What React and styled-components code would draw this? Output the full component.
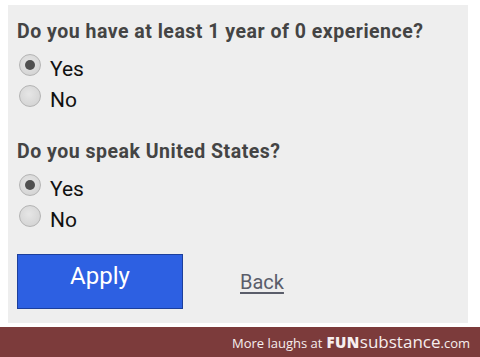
import React from "react";
import styled, { createGlobalStyle } from "styled-components";

const Global = createGlobalStyle`
  html, body { margin: 0; padding: 0; background: #ffffff; }
  body { width: 480px; height: 357px; overflow: hidden; font-family: Roboto, "Liberation Sans", sans-serif; }
`;

const Page = styled.div`
  width: 480px;
  height: 357px;
  display: flex;
  flex-direction: column;
  padding-top: 5px;
  box-sizing: border-box;
`;

const Panel = styled.div`
  margin-left: 8px;
  width: 460px;
  height: 318px;
  box-sizing: border-box;
  background: #eeeeee;
  padding: 16px 9px 0 9px;
  display: flex;
  flex-direction: column;
`;

const Question = styled.div`
  font-family: Roboto, "Liberation Sans", sans-serif;
  font-weight: 700;
  font-size: 19.5px;
  letter-spacing: 0.5px;
  line-height: 22px;
  color: #444444;
  margin-bottom: 11px;
  white-space: nowrap;
`;

const Group = styled.div`
  display: flex;
  flex-direction: column;
  margin-bottom: ${(p) => p.$gap || 0}px;
`;

const Option = styled.label`
  display: flex;
  align-items: flex-start;
  height: 31px;
  font-family: Roboto, "Liberation Sans", sans-serif;
  font-size: 21px;
  line-height: 31px;
  color: #111111;
`;

const Radio = styled.span`
  width: 22px;
  height: 22px;
  box-sizing: border-box;
  border-radius: 50%;
  margin-left: 2px;
  margin-right: 9px;
  border: 1.5px solid #b4b4b4;
  background: radial-gradient(circle at 45% 40%, #e6e6e6 0%, #d6d6d6 70%, #c8c8c8 100%);
  display: flex;
  align-items: center;
  justify-content: center;
  &::after {
    content: "";
    width: 10px;
    height: 10px;
    border-radius: 50%;
    background: #4f4f4f;
    display: ${(p) => (p.$checked ? "block" : "none")};
  }
`;

const Actions = styled.div`
  display: flex;
  align-items: center;
  margin-top: 18px;
  gap: 57px;
`;

const ApplyButton = styled.button`
  width: 166px;
  height: 55px;
  box-sizing: border-box;
  background: #2d60e2;
  border: 1.5px solid #1c3f9c;
  color: #ffffff;
  font-family: Roboto, "Liberation Sans", sans-serif;
  font-size: 24px;
  line-height: 28px;
  padding: 7px 0 0 0;
  display: flex;
  align-items: flex-start;
  justify-content: center;
  cursor: pointer;
`;

const BackLink = styled.a`
  font-family: Roboto, "Liberation Sans", sans-serif;
  font-size: 20px;
  color: #5a5d6a;
  text-decoration: underline;
  text-underline-offset: 3px;
  margin-top: 1px;
`;

const Footer = styled.div`
  margin-top: 4px;
  height: 30px;
  background: #7c3b3b;
  display: flex;
  align-items: baseline;
  justify-content: flex-end;
  padding: 0 10px 0 0;
  color: #f6eeee;
  font-family: "Open Sans", "DejaVu Sans", sans-serif;
  line-height: 30px;
`;

const Small = styled.span`
  font-size: 13px;
  margin-right: ${(p) => p.$mr || 0}px;
`;

const Fun = styled.span`
  font-size: 15px;
  font-weight: 800;
  letter-spacing: 0.5px;
`;

const Sub = styled.span`
  font-size: 17px;
`;

const options = [
  {
    q: "Do you have at least 1 year of 0 experience?",
    gap: 25,
  },
  {
    q: "Do you speak United States?",
    gap: 0,
  },
];

export default function App() {
  return (
    <>
      <Global />
      <Page>
        <Panel>
          {options.map((o) => (
            <React.Fragment key={o.q}>
              <Question>{o.q}</Question>
              <Group $gap={o.gap}>
                <Option>
                  <Radio $checked />
                  Yes
                </Option>
                <Option>
                  <Radio />
                  No
                </Option>
              </Group>
            </React.Fragment>
          ))}
          <Actions>
            <ApplyButton>Apply</ApplyButton>
            <BackLink>Back</BackLink>
          </Actions>
        </Panel>
        <Footer>
          <Small $mr={4}>More laughs at</Small>
          <Fun>FUN</Fun>
          <Sub>substance</Sub>
          <Small>.com</Small>
        </Footer>
      </Page>
    </>
  );
}
